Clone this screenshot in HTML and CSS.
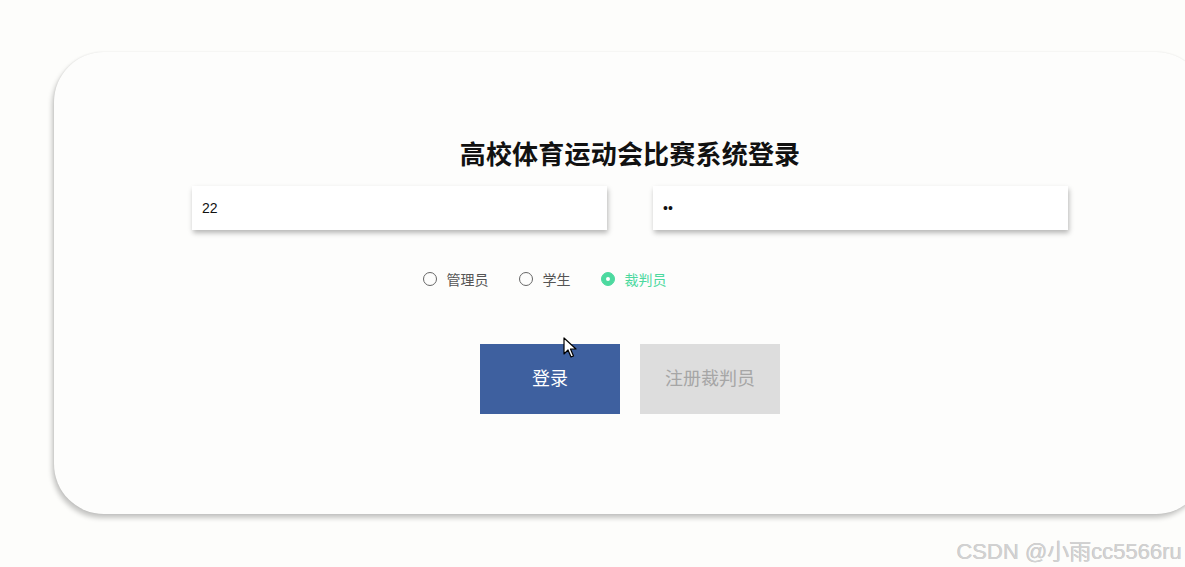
FILE: index.html
```
<!DOCTYPE html>
<html lang="zh-CN">
<head>
<meta charset="utf-8">
<title>高校体育运动会比赛系统登录</title>
<link rel="stylesheet" href="styles.css">
</head>
<body>
<div class="card">
  <h1 class="title">高校体育运动会比赛系统登录</h1>
  <div class="fields">
    <input class="field" type="text" value="22">
    <input class="field" type="password" value="11">
  </div>
  <div class="roles">
    <label class="role"><span class="dot"></span><span class="role-text">管理员</span></label>
    <label class="role"><span class="dot"></span><span class="role-text">学生</span></label>
    <label class="role role-on"><span class="dot"></span><span class="role-text">裁判员</span></label>
  </div>
  <div class="actions">
    <button class="btn btn-primary">登录</button>
    <button class="btn btn-muted">注册裁判员</button>
  </div>
</div>
<svg class="cursor" width="14" height="22" viewBox="0 0 14 22"><path d="M1 1 L1 17 L5 13 L8 20 L10.5 19 L7.5 12 L13 12 Z" fill="#fff" stroke="#000" stroke-width="1.2" stroke-linejoin="round"/></svg>
<div class="watermark">CSDN @小雨cc5566ru</div>
</body>
</html>
```
FILE: styles.css
```
html, body {
  margin: 0;
  padding: 0;
}
body {
  background: #fdfdfb;
  width: 1185px;
  height: 567px;
  overflow: hidden;
  position: relative;
  font-family: "Noto Sans CJK SC", "Liberation Sans", sans-serif;
}
.card {
  margin: 52px 0 0 54px;
  width: 1152px;
  height: 462px;
  box-sizing: border-box;
  border-radius: 50px;
  background: #fdfdfc;
  box-shadow: -2px 4px 5px rgba(0, 0, 0, 0.22), 0 0 2px rgba(0, 0, 0, 0.1);
  padding-top: 84px;
  display: flex;
  flex-direction: column;
  align-items: center;
}
.title {
  margin: 0;
  font-size: 26px;
  line-height: 34px;
  font-weight: 700;
  color: #111;
  letter-spacing: 0.2px;
}
.fields {
  margin-top: 16px;
  display: flex;
  gap: 46px;
}
.field {
  width: 415px;
  height: 44px;
  box-sizing: border-box;
  border: none;
  outline: none;
  background: #fff;
  box-shadow: 1px 3px 5px rgba(0, 0, 0, 0.28);
  padding: 0 10px;
  font-family: "Liberation Sans", Arial, sans-serif;
  font-size: 14px;
  color: #111;
}
.roles {
  margin-top: 39px;
  height: 20px;
  display: flex;
  align-items: center;
  gap: 30px;
  padding-right: 171px;
}
.role {
  display: flex;
  align-items: center;
  gap: 10px;
  font-size: 14px;
  color: #555;
}
.dot {
  width: 14px;
  height: 14px;
  box-sizing: border-box;
  border-radius: 50%;
  border: 1px solid #666;
  display: flex;
  align-items: center;
  justify-content: center;
}
.role-on .dot {
  border-color: #4cd99f;
  background: #4cd99f;
}
.role-on .dot::after {
  content: "";
  width: 4px;
  height: 4px;
  border-radius: 50%;
  background: #fff;
}
.role-on .role-text {
  color: #4cd99f;
}
.actions {
  margin-top: 55px;
  display: flex;
  gap: 20px;
}
.btn {
  width: 140px;
  height: 70px;
  border: none;
  font-family: "Noto Sans CJK SC", sans-serif;
  font-size: 18px;
  padding: 0 0 5px;
}
.btn-primary {
  background: #3e609f;
  color: #fff;
}
.btn-muted {
  background: #dddddd;
  color: #a6a6a6;
}
.cursor {
  position: absolute;
  left: 563px;
  top: 337px;
}
.watermark {
  position: absolute;
  right: 3px;
  top: 533px;
  font-family: "Liberation Sans", "Noto Sans CJK SC", sans-serif;
  font-size: 22px;
  color: #d2d2d2;
  text-shadow: -0.5px -0.5px 0 #c0c0c0;
  white-space: nowrap;
}
```
